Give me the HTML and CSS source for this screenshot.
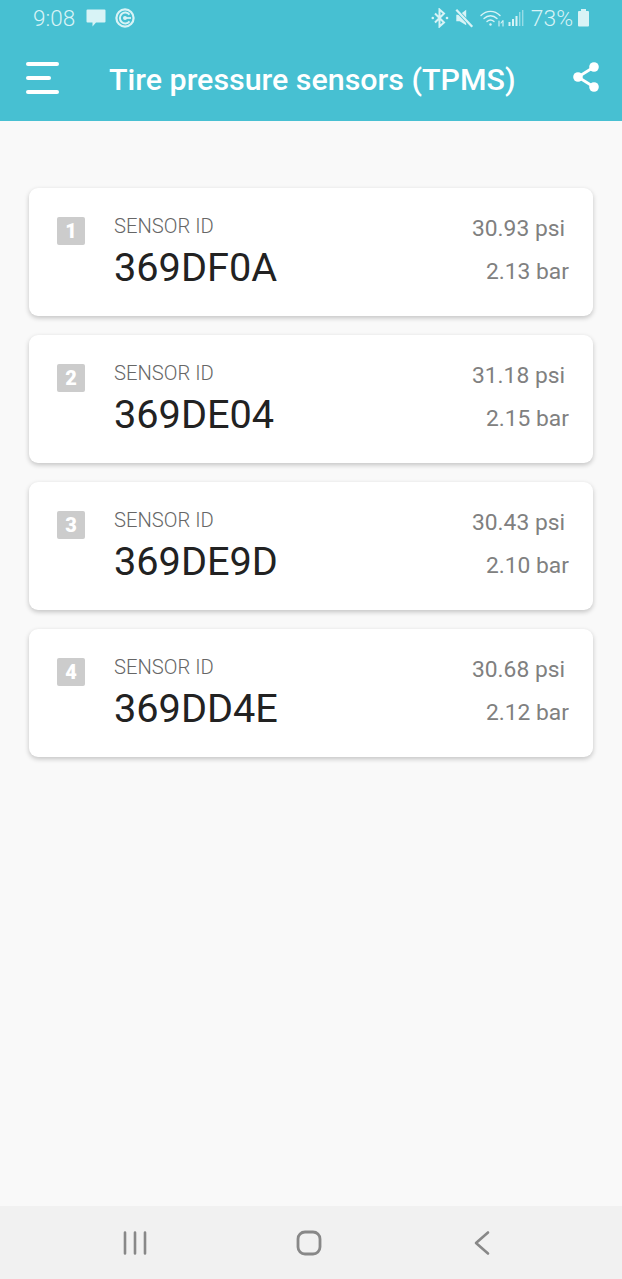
FILE: index.html
```html
<!DOCTYPE html>
<html lang="en">
<head>
    <meta charset="UTF-8">
    <meta name="viewport" content="width=device-width, initial-scale=1.0">
    <title>Tire pressure sensors (TPMS)</title>
    <link rel="stylesheet" href="styles.css">
</head>
<body>
    <header class="top">
        <div class="status-bar">
            <div class="status-left">
                <span class="clock">9:08</span>
                <svg class="status-icon" width="22" height="20" viewBox="0 0 22 20"><path d="M2.500 1.500h17a1 1 0 0 1 1 1v11a1 1 0 0 1-1 1H11l-3.500 4v-4h-5a1 1 0 0 1-1-1v-11a1 1 0 0 1 1-1z" fill="#d8f3f6"/></svg>
                <svg class="status-icon" width="22" height="22" viewBox="0 0 22 22" fill="none" stroke="#d8f3f6"><circle cx="11" cy="11" r="8.600" stroke-width="2.200"/><path d="M15.500 7.600a5.400 5.400 0 1 0 0 6.800" stroke-width="2"/><circle cx="11" cy="11" r="2" fill="#d8f3f6" stroke="none"/><path d="M11 11h6" stroke-width="1.800"/></svg>
            </div>
            <div class="status-right">
                <svg class="bluetooth" width="18" height="20" viewBox="0 0 18 20" fill="none" stroke="#d8f3f6" stroke-width="2"><path d="M4 5.500l9 9-4.500 4v-17l4.500 4-9 9"/><circle cx="1.800" cy="10" r="1.300" fill="#d8f3f6" stroke="none"/><circle cx="16" cy="10" r="1.300" fill="#d8f3f6" stroke="none"/></svg>
                <svg class="mute" width="22" height="22" viewBox="0 0 20 20"><path d="M3 7h3l6-4.500v14L6 13H3z" fill="#d8f3f6"/><path d="M2.500 2l15 16" stroke="#47c0d2" stroke-width="3.500"/><path d="M3 2.500l14.500 15.500" stroke="#d8f3f6" stroke-width="2"/></svg>
                <svg class="wifi" width="25" height="20" viewBox="0 0 25 20" fill="none" stroke="#d8f3f6" stroke-width="1.400" stroke-linecap="round"><path d="M1 7.500c5.500-5.500 13.500-5.500 19 0"/><path d="M4 10.500c3.800-3.600 9.200-3.600 13 0"/><path d="M7 13.500c2.200-2 4.800-2 7 0"/><circle cx="10.500" cy="16.500" r="1.200" fill="#d8f3f6" stroke="none"/><path d="M19 13v5M21 15l2-2.500M23 13v5" stroke-width="1.100"/></svg>
                <svg width="18" height="20" viewBox="0 0 17 20" fill="#d8f3f6"><rect x="1" y="14" width="2" height="4"/><rect x="4.500" y="11" width="2" height="7"/><rect x="8" y="8" width="2" height="10"/><rect x="11.500" y="4" width="1.400" height="14" opacity=".55"/><rect x="14.500" y="2" width="1.400" height="16" opacity=".55"/></svg>
                <span class="battery-pct">73%</span>
                <svg class="battery" width="13" height="20" viewBox="0 0 13 20" fill="#d8f3f6"><rect x="4" y="1" width="5" height="3"/><rect x="1" y="3" width="11" height="15.500" rx="1"/></svg>
            </div>
        </div>
        <div class="app-bar">
            <svg class="menu-icon" width="34" height="34" viewBox="0 0 34 34" fill="#ffffff"><rect y="1" width="33" height="4" rx="2"/><rect y="15" width="25" height="4" rx="2" /><rect y="29" width="33" height="4" rx="2"/></svg>
            <h1 class="title">Tire pressure sensors (TPMS)</h1>
            <svg class="share-icon" width="28" height="32" viewBox="0 0 28 32" fill="#ffffff" stroke="#ffffff"><path d="M22 6L6 16l16 10" fill="none" stroke-width="2.800"/><circle cx="22" cy="6" r="4.800" stroke="none"/><circle cx="6" cy="16" r="4.800" stroke="none"/><circle cx="22" cy="26" r="4.800" stroke="none"/></svg>
        </div>
    </header>

    <main class="sensor-list">
        <div class="card">
            <span class="badge">1</span>
            <div class="sensor">
                <div class="sensor-label">SENSOR ID</div>
                <div class="sensor-id">369DF0A</div>
            </div>
            <div class="readings">
                <div class="psi">30.93 psi</div>
                <div class="bar">2.13 bar</div>
            </div>
        </div>
        <div class="card">
            <span class="badge">2</span>
            <div class="sensor">
                <div class="sensor-label">SENSOR ID</div>
                <div class="sensor-id">369DE04</div>
            </div>
            <div class="readings">
                <div class="psi">31.18 psi</div>
                <div class="bar">2.15 bar</div>
            </div>
        </div>
        <div class="card">
            <span class="badge">3</span>
            <div class="sensor">
                <div class="sensor-label">SENSOR ID</div>
                <div class="sensor-id">369DE9D</div>
            </div>
            <div class="readings">
                <div class="psi">30.43 psi</div>
                <div class="bar">2.10 bar</div>
            </div>
        </div>
        <div class="card">
            <span class="badge">4</span>
            <div class="sensor">
                <div class="sensor-label">SENSOR ID</div>
                <div class="sensor-id">369DD4E</div>
            </div>
            <div class="readings">
                <div class="psi">30.68 psi</div>
                <div class="bar">2.12 bar</div>
            </div>
        </div>
    </main>

    <nav class="nav-bar">
        <svg width="26" height="26" viewBox="0 0 26 26" fill="none" stroke="#888888" stroke-width="2.600" stroke-linecap="round"><path d="M3 2.500v21M13 2.500v21M23 2.500v21"/></svg>
        <svg class="home" width="26" height="26" viewBox="0 0 26 26" fill="none" stroke="#888888" stroke-width="2.800"><rect x="2" y="2" width="22" height="22" rx="7"/></svg>
        <svg width="18" height="26" viewBox="0 0 18 26" fill="none" stroke="#888888" stroke-width="2.600" stroke-linecap="round" stroke-linejoin="round"><path d="M15 2.500L3 13l12 10.500"/></svg>
    </nav>
</body>
</html>
```

FILE: styles.css
```css
* {
    margin: 0;
    padding: 0;
    box-sizing: border-box;
}

body {
    background-color: #f9f9f9;
    font-family: Roboto, sans-serif;
    height: 1279px;
    display: flex;
    flex-direction: column;
    overflow: hidden;
}

.top {
    height: 121px;
    background-color: #47c0d2;
}

.status-bar {
    height: 36px;
    padding: 0 32px 0 33px;
    display: flex;
    justify-content: space-between;
    align-items: center;
    color: #d8f3f6;
}

.status-left,
.status-right {
    display: flex;
    align-items: center;
}

.clock {
    font-size: 22.500px;
    font-weight: 300;
    margin-right: 10px;
}

.status-icon {
    margin-right: 7px;
}

.status-right {
    gap: 3px;
}

.bluetooth {
    margin-right: 1px;
}

.mute {
    margin-right: 2px;
}

.wifi {
    margin-right: -1px;
}

.battery-pct {
    font-size: 22.800px;
    font-weight: 300;
    margin-left: 3px;
}

.battery {
    margin-left: 1px;
}

.app-bar {
    height: 85px;
    padding: 0 22px 0 26px;
    display: flex;
    align-items: center;
    color: #ffffff;
}

.menu-icon {
    margin-top: -1px;
}

.title {
    flex: 1;
    margin-left: 49px;
    margin-top: 1px;
    font-size: 30.400px;
    font-weight: 500;
    white-space: nowrap;
}

.share-icon {
    margin-top: -3px;
}

.sensor-list {
    flex: 1;
    padding: 67px 29px 0;
    display: flex;
    flex-direction: column;
    gap: 19px;
}

.card {
    height: 128px;
    padding: 29px 24px 0 28px;
    background-color: #ffffff;
    border-radius: 9px;
    box-shadow: 0 2px 5px rgba(0, 0, 0, 0.22);
    display: flex;
    align-items: flex-start;
}

.badge {
    width: 28px;
    height: 28px;
    background-color: #cccccc;
    border-radius: 2px;
    color: #ffffff;
    font-size: 20px;
    font-weight: 900;
    text-align: center;
    line-height: 28px;
}

.sensor {
    flex: 1;
    margin-left: 29px;
}

.sensor-label {
    margin-top: -2px;
    font-size: 20.200px;
    font-weight: 300;
    line-height: 22px;
    color: #666666;
}

.sensor-id {
    margin-top: 8px;
    font-size: 39.700px;
    line-height: 46px;
    color: #222222;
}

.readings {
    margin-top: -1px;
    text-align: right;
    color: #808080;
    font-size: 22.800px;
}

.psi {
    line-height: 26px;
    margin-right: 4px;
}

.bar {
    line-height: 26px;
    margin-top: 17px;
}

.nav-bar {
    height: 73px;
    padding: 0 131px 0 122px;
    background-color: #f1f1f1;
    display: flex;
    justify-content: space-between;
    align-items: center;
}

.home {
    margin-right: 3px;
}
```
